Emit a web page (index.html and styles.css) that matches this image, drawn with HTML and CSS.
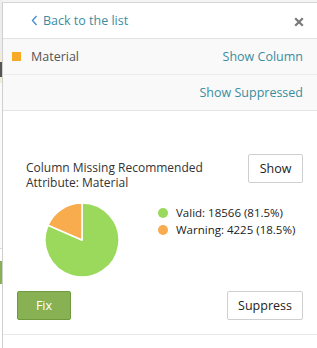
FILE: index.html
```html
<!DOCTYPE html>
<html>
<head>
<meta charset="utf-8">
<link rel="stylesheet" href="styles.css">
</head>
<body>
<div class="page">
  <div class="backdrop">
    <div class="bd bd-gray"></div>
    <div class="bd bd-beige"></div>
    <div class="bd bd-dark"></div>
    <div class="bd bd-beige2"></div>
    <div class="bd bd-light"></div>
    <div class="bd bd-line"></div>
    <div class="bd bd-white"></div>
    <div class="bd bd-green"></div>
    <div class="bd bd-rest"></div>
  </div>
  <div class="panel">
    <div class="header">
      <a class="back">
        <svg class="chev" width="7" height="11" viewBox="0 0 7 11"><path d="M5.5 1 L1.5 5.5 L5.5 10" fill="none" stroke="#4a90d0" stroke-width="1.4"/></svg>
        <span>Back to the list</span>
      </a>
      <svg class="close" width="10" height="10" viewBox="0 0 10 10"><path d="M1.2 1.2 L8.8 8.8 M8.8 1.2 L1.2 8.8" stroke="#7a7a7a" stroke-width="2.2"/></svg>
    </div>
    <div class="row">
      <div class="row-left"><span class="swatch"></span><span class="row-label">Material</span></div>
      <a class="link">Show Column</a>
    </div>
    <div class="row row-end">
      <a class="link">Show Suppressed</a>
    </div>
    <div class="content">
      <div class="top">
        <div class="title">Column Missing Recommended<br>Attribute: Material</div>
        <button class="btn">Show</button>
      </div>
      <div class="chart">
        <svg class="pie" width="78" height="78" viewBox="0 0 78 78">
          <path d="M39 39 L5.04 24.31 A37 37 0 1 0 39 2 Z" fill="#9ad95b" stroke="#fff" stroke-width="1.5" stroke-linejoin="round"/>
          <path d="M39 39 L39 2 A37 37 0 0 0 5.04 24.31 Z" fill="#f8ac4d" stroke="#fff" stroke-width="1.5" stroke-linejoin="round"/>
        </svg>
        <ul class="legend">
          <li><span class="dot dot-green"></span>Valid: 18566 (81.5%)</li>
          <li><span class="dot dot-orange"></span>Warning: 4225 (18.5%)</li>
        </ul>
      </div>
      <div class="actions">
        <button class="btn btn-fix">Fix</button>
        <button class="btn">Suppress</button>
      </div>
    </div>
  </div>
</div>
</body>
</html>
```
FILE: styles.css
```css
* { box-sizing: border-box; }
html, body { margin: 0; padding: 0; }
body {
  width: 317px;
  height: 348px;
  overflow: hidden;
  background: #f4f4f4;
  font-family: "Open Sans", "Liberation Sans", sans-serif;
}
.page {
  display: flex;
  height: 348px;
}
.backdrop {
  width: 2px;
  display: flex;
  flex-direction: column;
  flex: none;
}
.bd { width: 2px; flex: none; }
.bd-gray { height: 53px; background: #ededed; }
.bd-beige { height: 9px; background: #f3ecd9; }
.bd-dark { height: 15px; background: #555; }
.bd-beige2 { height: 6px; background: #f3ecd9; }
.bd-light { height: 165px; background: #fafafa; }
.bd-line { height: 1px; background: #ddd; }
.bd-white { height: 12px; background: #fff; }
.bd-green { height: 23px; background: #87b152; }
.bd-rest { flex: 1; background: #fff; }

.panel {
  flex: 1;
  margin-top: 2px;
  border-top: 1px solid #d6d6d6;
  border-left: 1px solid #cfcfcf;
  background: #fff;
  display: flex;
  flex-direction: column;
}
.header {
  height: 36px;
  display: flex;
  align-items: center;
  justify-content: space-between;
  padding: 0 13px 0 28px;
  border-bottom: 1px solid #e2e2e2;
}
.back {
  display: flex;
  align-items: center;
  gap: 5px;
  color: #3a8da3;
  font-size: 12.5px;
}
.chev { display: block; }
.close { display: block; margin-top: 3px; }
.row {
  height: 36px;
  background: #f9f9f9;
  border-bottom: 1px solid #ececec;
  display: flex;
  align-items: center;
  justify-content: space-between;
  padding: 0 14px 0 9px;
}
.row-end { justify-content: flex-end; border-bottom-color: #e4e4e4; }
.row-left { display: flex; align-items: center; }
.swatch {
  width: 9px;
  height: 9px;
  background: #f7a928;
  margin-right: 10px;
}
.row-label { color: #555; font-size: 12.5px; }
.link { color: #3a8da0; font-size: 12.5px; }

.content {
  padding: 43px 14px 14px 14px;
  border-bottom: 1px solid #e8e8e8;
  display: flex;
  flex-direction: column;
}
.top {
  display: flex;
  justify-content: space-between;
  align-items: flex-start;
}
.title {
  margin: 6px 0 0 9px;
  font-size: 12px;
  line-height: 15px;
  color: #333;
}
.btn {
  font-family: "Open Sans", "Liberation Sans", sans-serif;
  font-size: 12.5px;
  color: #222;
  background: #fff;
  border: 1px solid #cfcfcf;
  border-radius: 2px;
  height: 29px;
  padding: 0 10px;
  margin: 0;
}
.top .btn { width: 55px; padding: 0; }
.chart {
  display: flex;
  align-items: flex-start;
  margin-top: 11px;
}
.pie { display: block; margin-left: 26px; flex: none; }
.legend {
  list-style: none;
  margin: 3px 0 0 37px;
  padding: 0;
  font-size: 11.5px;
  color: #222;
}
.legend li {
  display: flex;
  align-items: center;
  height: 17px;
}
.dot {
  width: 10px;
  height: 10px;
  border-radius: 50%;
  margin-right: 8px;
  flex: none;
}
.dot-green { background: #9ad95b; }
.dot-orange { background: #f8ac4d; }
.actions {
  display: flex;
  justify-content: space-between;
  margin-top: 12px;
}
.btn-fix {
  width: 54px;
  background: #87b152;
  border-color: #6f9b3f;
  color: #fff;
}
.actions .btn:last-child { width: 76px; padding: 0; }
```
